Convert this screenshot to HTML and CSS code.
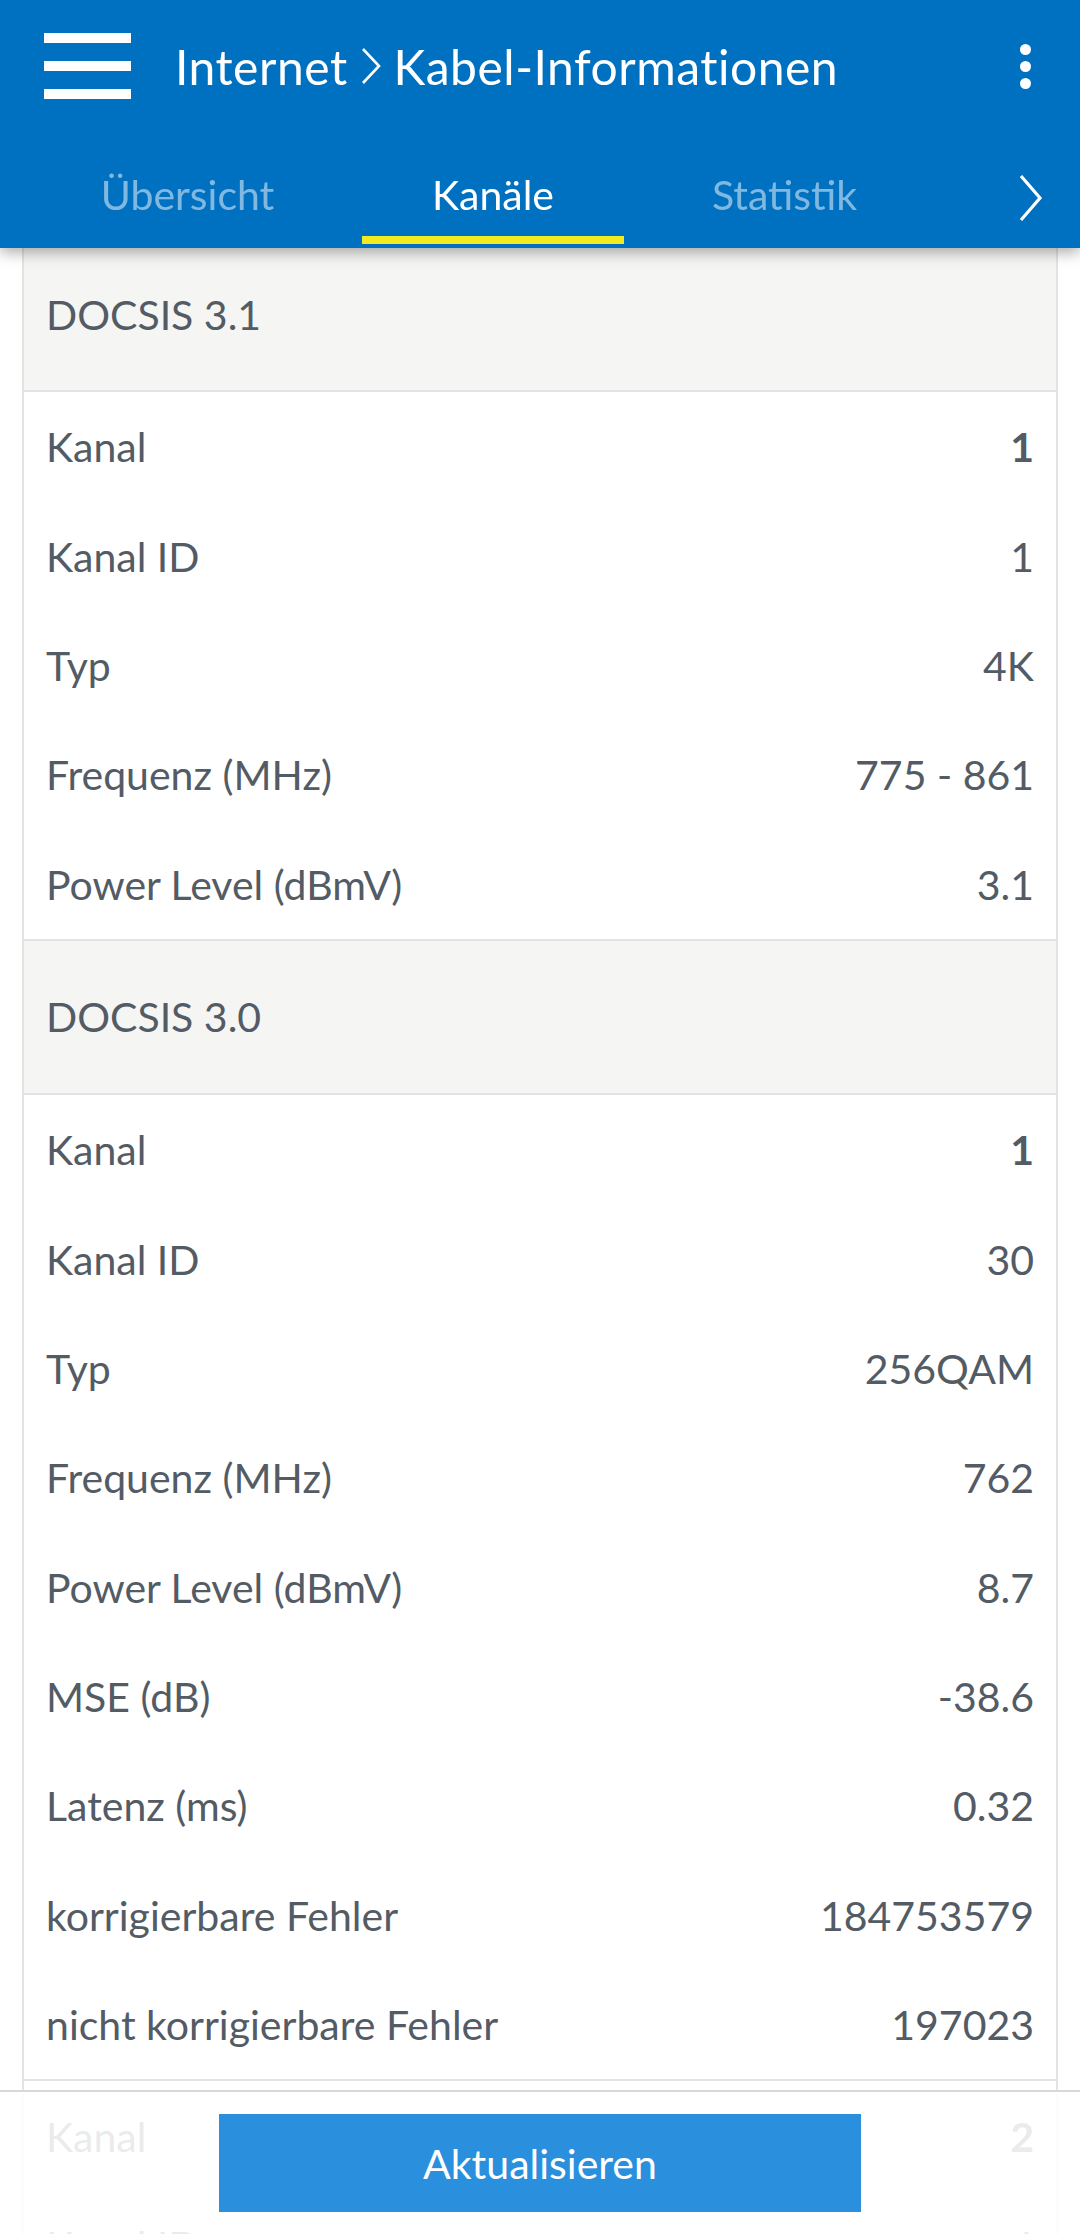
FILE: index.html
```html
<!DOCTYPE html>
<html lang="de">
<head>
    <meta charset="UTF-8">
    <meta name="viewport" content="width=device-width, initial-scale=1.0">
    <title>Kabel-Informationen</title>
    <link rel="stylesheet" href="styles.css">
</head>
<body>
    <header class="appbar">
        <div class="toolbar">
            <div class="hamburger">
                <span></span>
                <span></span>
                <span></span>
            </div>
            <div class="title">
                <span>Internet</span>
                <svg class="crumb" width="22" height="38" viewBox="0 0 22 38">
                    <polyline points="3,2 19,19 3,36" fill="none" stroke="#fff" stroke-width="2.6"/>
                </svg>
                <span>Kabel-Informationen</span>
            </div>
            <div class="kebab">
                <span></span>
                <span></span>
                <span></span>
            </div>
        </div>
        <nav class="tabs">
            <div class="tab">Übersicht</div>
            <div class="tab active">Kanäle</div>
            <div class="tab">Statistik</div>
            <svg class="more" width="26" height="48" viewBox="0 0 26 48">
                <polyline points="3,2 22,24 3,46" fill="none" stroke="#fff" stroke-width="3.2"/>
            </svg>
        </nav>
    </header>

    <main class="content">
        <section class="group">
            <div class="group-head">DOCSIS 3.1</div>
            <div class="channel">
                <div class="row"><span>Kanal</span><b>1</b></div>
                <div class="row"><span>Kanal ID</span><span>1</span></div>
                <div class="row"><span>Typ</span><span>4K</span></div>
                <div class="row"><span>Frequenz (MHz)</span><span>775 - 861</span></div>
                <div class="row"><span>Power Level (dBmV)</span><span>3.1</span></div>
            </div>
        </section>

        <section class="group">
            <div class="group-head">DOCSIS 3.0</div>
            <div class="channel">
                <div class="row"><span>Kanal</span><b>1</b></div>
                <div class="row"><span>Kanal ID</span><span>30</span></div>
                <div class="row"><span>Typ</span><span>256QAM</span></div>
                <div class="row"><span>Frequenz (MHz)</span><span>762</span></div>
                <div class="row"><span>Power Level (dBmV)</span><span>8.7</span></div>
                <div class="row"><span>MSE (dB)</span><span>-38.6</span></div>
                <div class="row"><span>Latenz (ms)</span><span>0.32</span></div>
                <div class="row"><span>korrigierbare Fehler</span><span>184753579</span></div>
                <div class="row"><span>nicht korrigierbare Fehler</span><span>197023</span></div>
            </div>
            <div class="channel">
                <div class="row"><span>Kanal</span><b>2</b></div>
                <div class="row"><span>Kanal ID</span><span>4</span></div>
            </div>
        </section>
    </main>

    <footer class="bottombar">
        <button type="button" class="refresh">Aktualisieren</button>
    </footer>
</body>
</html>
```

FILE: styles.css
```css
body {
    font-family: Lato, "Open Sans", sans-serif;
    margin: 0;
    padding: 0;
    background: #fff;
    color: #535b65;
    width: 1080px;
    height: 2234px;
    overflow: hidden;
}

/* top app bar, stays over the scrolled list */
.appbar {
    position: fixed;
    top: 0;
    left: 0;
    right: 0;
    height: 248px;
    background: #0070c0;
    color: #fff;
    z-index: 2;
    box-shadow: 0 4px 14px rgba(0, 0, 0, 0.35);
}

.toolbar {
    height: 132px;
    display: flex;
    align-items: center;
    padding: 0 0 0 44px;
}

.hamburger {
    width: 87px;
    display: flex;
    flex-direction: column;
    gap: 18px;
}
.hamburger span {
    display: block;
    height: 10px;
    background: #fff;
}

.title {
    margin-left: 44px;
    display: flex;
    align-items: center;
    gap: 12px;
    font-size: 48px;
    letter-spacing: 0.5px;
}

.kebab {
    margin-left: auto;
    margin-right: 49px;
    display: flex;
    flex-direction: column;
    gap: 6px;
}
.kebab span {
    display: block;
    width: 11px;
    height: 11px;
    border-radius: 50%;
    background: #fff;
}

.tabs {
    height: 116px;
    display: grid;
    grid-template-columns: 315px 262px 287px 1fr;
    column-gap: 17px;
    padding-left: 30px;
    align-items: start;
}

.tab {
    height: 112px;
    box-sizing: border-box;
    padding-top: 12px;
    display: flex;
    align-items: center;
    justify-content: center;
    font-size: 41px;
    color: rgba(255, 255, 255, 0.5);
}
.tab.active {
    color: #fff;
    box-shadow: inset 0 -8px 0 #f4ea1f;
}

.more {
    justify-self: end;
    align-self: center;
    margin: 16px 36px 0 0;
}

/* channel list */
.content {
    padding-top: 238px;
}

.group {
    margin: 0 22px;
    border-left: 2px solid #e3e3e3;
    border-right: 2px solid #e3e3e3;
}

.group-head {
    height: 152px;
    display: flex;
    align-items: center;
    padding: 0 22px;
    background: #f5f5f4;
    border-bottom: 2px solid #e3e3e3;
    font-size: 41px;
}

.channel {
    border-bottom: 2px solid #e3e3e3;
}

.row {
    height: 109.4px;
    display: flex;
    align-items: center;
    justify-content: space-between;
    padding: 0 22px;
    font-size: 41px;
}
.row b {
    font-weight: 700;
}

/* refresh bar over the list */
.bottombar {
    position: fixed;
    left: 0;
    right: 0;
    bottom: 0;
    height: 120px;
    border-top: 2px solid #d9d9d9;
    background: rgba(255, 255, 255, 0.88);
    display: flex;
    justify-content: center;
    align-items: flex-start;
    padding-top: 22px;
    z-index: 2;
}

.refresh {
    width: 642px;
    height: 98px;
    border: none;
    border-radius: 0;
    background: #2a8fdd;
    color: #fff;
    font-family: Lato, "Open Sans", sans-serif;
    font-size: 41px;
    cursor: pointer;
}
```
